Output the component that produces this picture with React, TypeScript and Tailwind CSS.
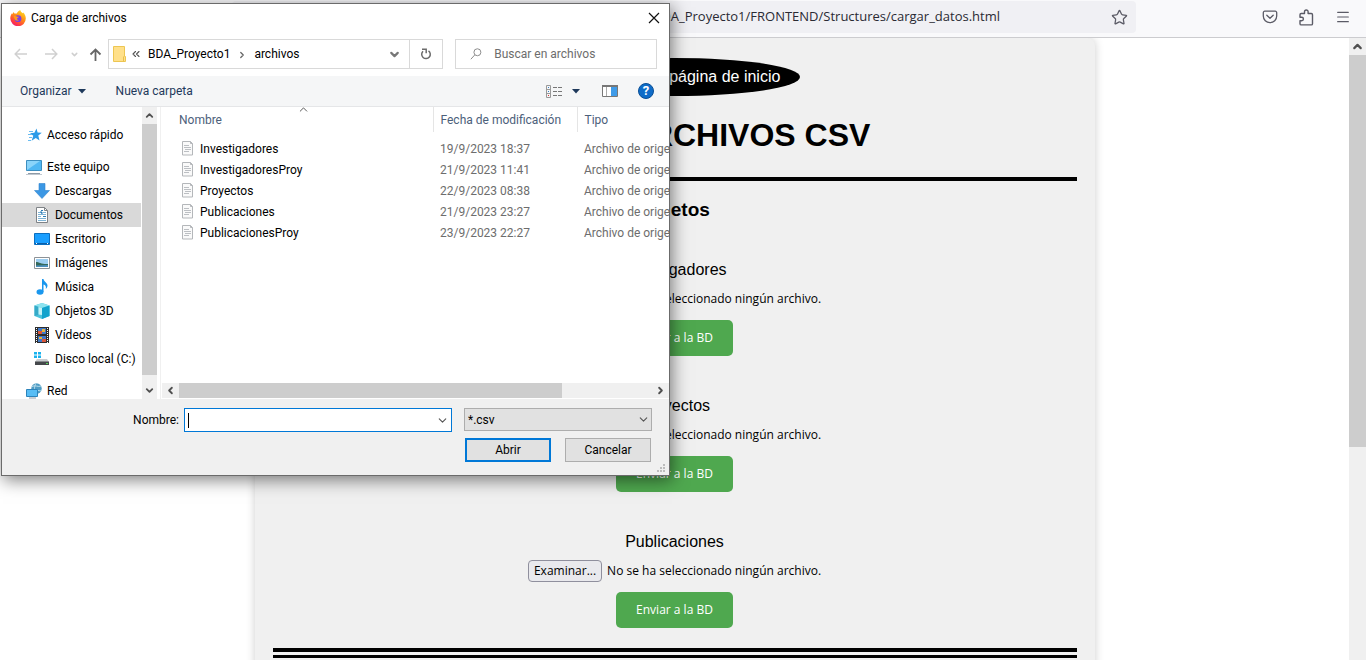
import type { ReactNode } from "react";
import { ChevronDown, ChevronLeft, ChevronRight, ChevronUp, ChevronsLeft, Menu, Star } from "lucide-react";

const uiFont = "font-['Open_Sans','Noto_Sans',sans-serif]";
const dialogFont = "font-['Roboto','Open_Sans',sans-serif]";

function Firefox() {
  return (
    <svg width="16" height="16" viewBox="0 0 16 16" aria-hidden="true">
      <defs>
        <linearGradient id="ffx" x1="0.8" y1="0" x2="0.2" y2="1">
          <stop offset="0" stopColor="#ffe226" />
          <stop offset="0.45" stopColor="#ff8a16" />
          <stop offset="0.8" stopColor="#ff3647" />
          <stop offset="1" stopColor="#e31587" />
        </linearGradient>
      </defs>
      <path d="M10.2 0c.3 1.700 1.500 2.300 2.500 3.200l.6-.7c1.500 1.600 2.500 3.700 2.500 5.900A7.700 7.700 0 0 1 .3 8.600C.2 6.300 1 4.600 2 3.200c0 .5 0 .8.2 1.100C2.600 3.300 3.300 2.500 4 2c-.1.7.1 1.200.5 1.500 1-.2 1.700-.1 2.300.1C7.400 2 8.600.7 10.200 0Z" fill="url(#ffx)" />
      <circle cx="8" cy="8.700" r="3.400" fill="#7b3fe4" />
      <path d="M3.600 6.200c1.300-.5 2.900-.3 3.700.5l1.600.1c-.2 1-1.500 1-1.800 1.800-.3.800.6 1.700 1.900 1.400-1 1.200-3.600.8-4.400-.7Z" fill="#ff9a1a" />
    </svg>
  );
}

function FolderIcon() {
  return (
    <svg width="14" height="18" viewBox="0 0 14 18" aria-hidden="true">
      <path d="M.5 1.500h11v10h1v5H.5Z" fill="#ffe08a" stroke="#edc652" />
      <path d="M10.500 11.500v5" stroke="#e8bf4c" />
    </svg>
  );
}

function FileIcon() {
  return (
    <svg width="12" height="15" viewBox="0 0 12 15" aria-hidden="true">
      <path d="M.5.5h8l2 2v11.500H.5Z" fill="#fafafa" stroke="#b4b7ba" />
      <path d="M8.500.5v2h2" fill="none" stroke="#b4b7ba" />
      <path d="M2 4.500h5M2 6.500h7M3 8.500h6M2 10.500h5" stroke="#bcbfc3" />
    </svg>
  );
}

const sideIcons: Record<string, ReactNode> = {
  star: (
    <>
      <path d="m10.500 1.500 1.100 4 4.200.3-3.500 2.700 1.200 5-3.700-2.600-4.200 2.900 1.700-5L4 6.300l4.400-.5Z" fill="#2c9be8" />
      <path d="M3 4.500h4M2 7.500h4M3 10.500h3M2 13.500h3" stroke="#6bbcf0" />
    </>
  ),
  pc: (
    <>
      <path d="M.5 1.500h15v10H.5Z" fill="#4fb7f3" stroke="#3d8fc0" />
      <path d="M1 11V2h13Z" fill="#8ad4fa" />
      <path d="M2 14.500h12" stroke="#8e9aa6" />
      <path d="M0 15.500h16" stroke="#c0c8d0" />
    </>
  ),
  down: <path d="M5 .5h6v7h4.500L8 15.500.5 7.500H5Z" fill="#3b97e4" stroke="#2f83cf" strokeWidth="0.600" />,
  docs: (
    <>
      <path d="M2.500.5h8l3 3v12h-11Z" fill="#fff" stroke="#7e8286" />
      <path d="M10.500.5v3h3" fill="none" stroke="#7e8286" />
      <path d="M4 5.500h2M9 5.500h3M4 7.500h8M4 9.500h3M4 11.500h8M4 13.500h8" stroke="#7fb4d6" />
      <path d="M7 3.500h2M6 5h2v2M9 9.500h3" stroke="#2a7db6" fill="#2a7db6" />
    </>
  ),
  desk: (
    <>
      <path d="M.5 2.500h15v11H.5Z" fill="#1a9fff" stroke="#0b6fc0" />
      <path d="M1 12.500h14" stroke="#0a5ea8" />
      <path d="M2 12.500h1M13 12.500h1" stroke="#fff" />
    </>
  ),
  img: (
    <>
      <path d="M.5 2.500h15v11H.5Z" fill="#fff" stroke="#8d9297" />
      <path d="M2 4h12v8H2Z" fill="#9ccdf0" />
      <path d="M2 7c3 0 6 2.500 12 2v3H2Z" fill="#35695b" />
      <path d="M2 10.500c4 0 8-.5 12-.5v2H2Z" fill="#4c8fbd" />
    </>
  ),
  music: (
    <>
      <path d="M8 0h1.500c.3 3 4 3.500 4 6.500 0 1.500-.7 2.500-1.700 3.500.5-2.500-.3-4-2.300-4.500V13H8Z" fill="#1a97ee" />
      <ellipse cx="6" cy="13" rx="3.500" ry="2.800" fill="#1a97ee" />
    </>
  ),
  cube: (
    <>
      <path d="m8 0 7.500 2.500v10.500L8 16 .5 13V2.500Z" fill="#4cc3dc" />
      <path d="m8 0 7.500 2.500L8 5 .5 2.500Z" fill="#8de3ef" />
      <path d="M.5 2.500 4.500 4v8L.5 13Z" fill="#35aac8" />
      <path d="M4.500 4 8 5v7l-3.500-.5Z" fill="#c5f3f8" />
      <path d="m8 5 7.500-2.500v10.500L8 16Z" fill="#12a3cd" />
    </>
  ),
  video: (
    <>
      <path d="M1 0h14v16H1Z" fill="#2d2d2d" />
      <path d="M2.500 1v15M13.500 1v15" stroke="#fff" strokeDasharray="1 1" />
      <path d="M4 1h8v6H4ZM4 9h8v6H4Z" fill="#3f78c8" />
      <path d="M4 4h4v3H4ZM8 12h4v3H8Z" fill="#d9573a" />
      <path d="M8 2h3v3H8ZM5 10h3v2H5Z" fill="#e5b33c" />
    </>
  ),
  disk: (
    <>
      <path d="M0 1h3v2.500H0ZM4 1h3v2.500H4ZM0 4.500h3V7H0ZM4 4.500h3V7H4Z" fill="#19b2ee" />
      <path d="M3 8h10l2 3H1Z" fill="#c9cccf" />
      <path d="M1 10.500h14V14H1Z" fill="#45484b" />
      <path d="M12 12.500h2" stroke="#59d65c" />
    </>
  ),
  net: (
    <>
      <circle cx="10.500" cy="5.500" r="5.200" fill="#4e9cc4" />
      <path d="M6 3.500c3-2 6 1 9-.5M6 7.500c4-2 6 1 9.500 0M10 .5c-2 3-2 7 0 10" stroke="#b9dcea" fill="none" />
      <path d="M.5 6.500h11v7H.5Z" fill="#57bdf5" stroke="#2c83ba" />
      <path d="M3 15h7" stroke="#8e9aa6" />
    </>
  ),
};

const places = [
  { icon: "star", label: "Acceso rápido", row: "pl-[24px] mb-2" },
  { icon: "pc", label: "Este equipo", row: "pl-[24px]" },
  { icon: "down", label: "Descargas", row: "pl-[32px]" },
  { icon: "docs", label: "Documentos", row: "pl-[32px] bg-[#d9d9d9]" },
  { icon: "desk", label: "Escritorio", row: "pl-[32px]" },
  { icon: "img", label: "Imágenes", row: "pl-[32px]" },
  { icon: "music", label: "Música", row: "pl-[32px]" },
  { icon: "cube", label: "Objetos 3D", row: "pl-[32px]" },
  { icon: "video", label: "Vídeos", row: "pl-[32px]" },
  { icon: "disk", label: "Disco local (C:)", row: "pl-[32px] mb-2" },
  { icon: "net", label: "Red", row: "pl-[24px]" },
];

const files = [
  ["Investigadores", "19/9/2023 18:37"],
  ["InvestigadoresProy", "21/9/2023 11:41"],
  ["Proyectos", "22/9/2023 08:38"],
  ["Publicaciones", "21/9/2023 23:27"],
  ["PublicacionesProy", "23/9/2023 22:27"],
];

function BrowserBar() {
  return (
    <header className="flex h-[38px] shrink-0 items-start border-b border-[#cccccf] bg-[#f9f9fb] pr-[15px] pt-px text-[#5b5b66]">
      <div className="ml-[232px] flex h-8 flex-1 items-center rounded bg-[#f0f0f4] pr-2">
        <input
          aria-label="Dirección"
          readOnly
          className={`${uiFont} min-w-0 flex-1 bg-transparent pr-[111px] text-right text-[13px] text-[#2a2a33] outline-none`}
          value="localhost/BDA_Proyecto1/FRONTEND/Structures/cargar_datos.html"
        />
        <button aria-label="Añadir marcador">
          <Star size={17} strokeWidth={1.8} />
        </button>
      </div>
      <div className="ml-[126px] flex h-8 items-center gap-5">
        <button aria-label="Pocket">
          <svg width="16" height="16" viewBox="0 0 16 16" fill="none" stroke="currentColor" strokeWidth="1.300" strokeLinecap="round" strokeLinejoin="round">
            <path d="M2.800 2.200h10.400a1.500 1.500 0 0 1 1.500 1.500V7A6.700 6.700 0 0 1 1.300 7V3.700a1.500 1.500 0 0 1 1.500-1.500Z" />
            <path d="m4.800 6.200 3.200 3 3.200-3" />
          </svg>
        </button>
        <button aria-label="Extensiones">
          <svg width="17" height="17" viewBox="0 0 17 17" fill="none" stroke="currentColor" strokeWidth="1.400" strokeLinejoin="round">
            <path d="M6.500 4.500V2.800a1.800 1.800 0 0 1 3.600 0v1.700h3.200c.8 0 1.200.4 1.200 1.200v9c0 .8-.4 1.200-1.200 1.200H3.200c-.8 0-1.200-.4-1.200-1.200v-3h1.700a1.700 1.700 0 0 0 0-3.400H2V5.700c0-.8.400-1.200 1.200-1.200Z" />
          </svg>
        </button>
        <button aria-label="Menú">
          <Menu size={16} strokeWidth={1.8} />
        </button>
      </div>
    </header>
  );
}

function Upload({ title, id }: { title: string; id: string }) {
  return (
    <form className="mb-10 flex flex-col items-center last-of-type:mb-5">
      <p className="text-[16px] leading-[19px]">{title}</p>
      <div className={`${uiFont} mt-[9px] flex h-[22px] items-center gap-[5px] text-[12px]`}>
        <label htmlFor={id} className="flex h-[22px] items-center rounded-[4px] border border-[#8f8f9d] bg-[#e9e9ed] px-[5px]">
          Examinar...
        </label>
        <input id={id} type="file" accept=".csv" className="sr-only" />
        <span>No se ha seleccionado ningún archivo.</span>
      </div>
      <button type="button" className={`${uiFont} mt-[10px] h-9 rounded-[5px] bg-[#4fa84f] px-5 text-[12px] text-white`}>
        Enviar a la BD
      </button>
    </form>
  );
}

function Dialog() {
  return (
    <section
      role="dialog"
      aria-label="Carga de archivos"
      className={`${dialogFont} absolute left-px top-[3px] flex w-[669px] flex-col border border-[#6b6b6b] bg-white text-[12px] leading-4 text-black shadow-[2px_4px_16px_rgba(0,0,0,0.5)]`}
    >
      <div className="flex h-[28px] items-center pl-2 pr-2">
        <Firefox />
        <h2 className="ml-[5px] flex-1">Carga de archivos</h2>
        <button aria-label="Cerrar">
          <svg width="14" height="14" viewBox="0 0 14 14" stroke="#111" strokeWidth="1.200">
            <path d="m2 2 10 10M12 2 2 12" />
          </svg>
        </button>
      </div>

      <div className="flex h-[44px] items-center pl-3 pr-3">
        <button aria-label="Atrás">
          <svg width="14" height="12" viewBox="0 0 14 12" fill="none" stroke="#d0d0d0" strokeWidth="1.500">
            <path d="M13 6H1.500M6 1 1.200 6 6 11" />
          </svg>
        </button>
        <button aria-label="Adelante" className="ml-4">
          <svg width="14" height="12" viewBox="0 0 14 12" fill="none" stroke="#d0d0d0" strokeWidth="1.500">
            <path d="M1 6h11.500M8 1l4.800 5L8 11" />
          </svg>
        </button>
        <button aria-label="Recientes" className="ml-3 text-[#cfcfcf]">
          <ChevronDown size={9} strokeWidth={4} />
        </button>
        <button aria-label="Subir" className="ml-[10px]">
          <svg width="13" height="13" viewBox="0 0 13 13" fill="none" stroke="#666" strokeWidth="1.800">
            <path d="M6.500 13V2M1.500 6.500l5-5 5 5" />
          </svg>
        </button>
        <div className="ml-[6px] flex h-[30px] w-[302px] items-center border border-[#d9d9d9] pl-1">
          <FolderIcon />
          <ChevronsLeft size={12} strokeWidth={2.2} className="ml-[3px] text-[#555]" />
          <span className="ml-[6px] flex-1 whitespace-nowrap">
            <span>BDA_Proyecto1</span>
            <ChevronRight size={10} strokeWidth={3} className="mx-[7px] inline text-[#666]" />
            <span>archivos</span>
          </span>
          <button aria-label="Ubicaciones anteriores" className="mr-2 text-[#777]">
            <ChevronDown size={13} strokeWidth={4} />
          </button>
        </div>
        <button aria-label="Actualizar" className="-ml-px flex h-[30px] w-[34px] items-center justify-center border border-[#d9d9d9]">
          <svg width="12" height="12" viewBox="0 0 12 12" fill="none" stroke="#6b6b6b" strokeWidth="1.500">
            <path d="M8.500 2.800A4.300 4.300 0 1 1 3 3.200" />
            <path d="M2 1.200h4.200v4" />
          </svg>
        </button>
        <div className="ml-3 flex h-[30px] flex-1 items-center border border-[#d9d9d9] pl-[14px]">
          <svg width="14" height="14" viewBox="0 0 14 14" fill="none" stroke="#888" strokeWidth="1.100">
            <circle cx="8.500" cy="5" r="4" />
            <path d="M5.500 8 1 13" />
          </svg>
          <input aria-label="Buscar en archivos" placeholder="Buscar en archivos" className="ml-3 w-full min-w-0 outline-none placeholder:text-[#6d6d6d]" />
        </div>
      </div>

      <div className="flex h-[31px] items-center border-b border-[#e5e6e8] bg-[#f5f6f7] pl-[18px] pr-[15px] text-[#1e395b]">
        <button className="flex items-center gap-[6px]">
          Organizar
          <svg width="8" height="5" viewBox="0 0 8 5" fill="#1e395b"><path d="M0 0h8L4 4.500Z" /></svg>
        </button>
        <button className="ml-[30px]">Nueva carpeta</button>
        <button aria-label="Cambiar la vista" className="ml-auto flex items-center gap-[9px]">
          <svg width="17" height="13" viewBox="0 0 17 13" fill="none">
            <path d="M.5.5h4v12h-4ZM.5 4.500h4M.5 8.500h4" stroke="#999" />
            <path d="M7 2.500h4M12 2.500h4M7 6.500h4M12 6.500h4M7 10.500h4M12 10.500h4" stroke="#777" />
            <path d="M2 2.500h1M2 6.500h1" stroke="#3a7fc4" />
            <path d="M2 10.500h1" stroke="#d33" />
          </svg>
          <svg width="8" height="5" viewBox="0 0 8 5" fill="#1e395b"><path d="M0 0h8L4 4.500Z" /></svg>
        </button>
        <button aria-label="Panel de vista previa" className="ml-[22px]">
          <svg width="16" height="12" viewBox="0 0 16 12" fill="none">
            <path d="M.5.5h15v11H.5Z" fill="#fff" stroke="#777" />
            <path d="M0 1h16" stroke="#777" strokeWidth="2" />
            <path d="M4.500 2v9" stroke="#aaa" />
            <path d="M9 2h6v9H9Z" fill="#3f9be8" />
          </svg>
        </button>
        <button aria-label="Ayuda" className="ml-5 flex size-4 items-center justify-center rounded-full border border-[#0a4f96] bg-[#0f6cc8] text-[13px] font-bold text-white">
          ?
        </button>
      </div>

      <div className="flex h-[292px]">
        <nav aria-label="Ubicaciones" className="w-[139px] overflow-hidden pt-4">
          <ul>
            {places.map((p) => (
              <li key={p.label} className={`flex h-6 items-center gap-[5px] whitespace-nowrap ${p.row}`}>
                <svg width="16" height="16" viewBox="0 0 16 16" className="shrink-0" aria-hidden="true">
                  {sideIcons[p.icon]}
                </svg>
                {p.label}
              </li>
            ))}
          </ul>
        </nav>
        <div className="ml-px flex w-[15px] flex-col items-center bg-[#f0f0f0] text-[#505050]">
          <ChevronUp size={11} strokeWidth={4} className="my-[3px]" />
          <div className="w-full flex-1 bg-[#cdcdcd]" />
          <ChevronDown size={11} strokeWidth={4} className="mb-[3px] mt-[10px]" />
        </div>
        <div className="ml-[3px] flex min-w-0 flex-1 flex-col border-l border-[#f0f0f0]">
          <div className="relative min-h-0 flex-1 overflow-hidden">
            <ChevronUp size={13} strokeWidth={1.8} className="absolute -top-1 left-[136px] text-[#555]" />
            <table className="w-[620px] table-fixed border-collapse text-left">
              <thead>
                <tr className="h-[25px] text-[#4c607a]">
                  <th className="w-[272px] border-r border-[#e5e5e5] pl-[18px] font-normal">Nombre</th>
                  <th className="w-[144px] border-r border-[#e5e5e5] pl-[7px] font-normal">Fecha de modificación</th>
                  <th className="pl-[7px] font-normal">Tipo</th>
                </tr>
              </thead>
              <tbody className="text-[#6d6d6d] before:block before:h-[6px]">
                {files.map(([name, date]) => (
                  <tr key={name} className="h-[21px]">
                    <td className="pl-[21px] text-black">
                      <span className="flex items-center gap-[6px]">
                        <FileIcon />
                        {name}
                      </span>
                    </td>
                    <td className="pl-[7px]">{date}</td>
                    <td className="whitespace-nowrap pl-[7px]">Archivo de origen</td>
                  </tr>
                ))}
              </tbody>
            </table>
          </div>
          <div className="mb-px ml-px flex h-[15px] items-center bg-[#f0f0f0] text-[#505050]">
            <ChevronLeft size={11} strokeWidth={4} className="mx-[3px]" />
            <div className="h-full w-[383px] bg-[#cdcdcd]" />
            <ChevronRight size={11} strokeWidth={4} className="ml-auto mr-[3px]" />
          </div>
        </div>
      </div>

      <div className="relative bg-[#f0f0f0] pb-[13px] pr-[17px] pt-[9px]">
        <div className="flex items-start justify-end">
          <label htmlFor="filename" className="mr-[5px] leading-6">Nombre:</label>
          <div className="flex h-6 w-[268px] items-center border border-[#0078d7] bg-white pr-[2px]">
            <span className="ml-[3px] h-[15px] w-px bg-black" />
            <input id="filename" className="min-w-0 flex-1 outline-none" />
            <ChevronDown size={13} strokeWidth={2} className="text-[#555]" />
          </div>
          <div className="relative ml-3 w-[188px]">
            <select aria-label="Tipo de archivo" className="h-[23px] w-full appearance-none border border-[#adadad] bg-[#e1e1e1] pl-[3px]">
              <option>*.csv</option>
            </select>
            <ChevronDown size={13} strokeWidth={2} className="absolute right-[2px] top-[5px] text-[#555]" />
          </div>
        </div>
        <div className="mt-[6px] flex justify-end gap-[14px] pr-px">
          <button className="h-6 w-[86px] border-2 border-[#0078d7] bg-[#e1e1e1]">Abrir</button>
          <button className="h-6 w-[86px] border border-[#adadad] bg-[#e1e1e1]">Cancelar</button>
        </div>
        <svg width="9" height="9" viewBox="0 0 9 9" className="absolute bottom-[2px] right-[3px]" fill="#bdbdbd">
          <path d="M6 0h2v2H6ZM3 3h2v2H3ZM6 3h2v2H6ZM0 6h2v2H0ZM3 6h2v2H3ZM6 6h2v2H6Z" />
        </svg>
      </div>
    </section>
  );
}

export default function App() {
  return (
    <div className="relative flex h-screen flex-col overflow-hidden bg-white font-['Liberation_Sans',Arial,sans-serif] text-black">
      <BrowserBar />
      <div className="flex min-h-0 flex-1">
        <main className="min-w-0 flex-1 overflow-hidden">
          <div className="mx-auto flex w-full max-w-[840px] flex-col rounded-t-[8px] bg-[#f0f0f0] px-[18px] pb-5 pt-5 shadow-[0_0_10px_rgba(0,0,0,0.2)]">
            <a href="#inicio" className="flex h-[38px] items-center self-center rounded-[50%] bg-black px-5 text-[16px] text-white">
              Regresar a la página de inicio
            </a>
            <h1 className="mt-[21px] text-center text-[32px] font-bold leading-[37px]">CARGAR ARCHIVOS CSV</h1>
            <hr className="mt-[23px] border-0 border-t-4 border-black" />
            <h3 className="mb-10 mt-[18px] text-center text-[19px] font-bold leading-[21px]">Objetos</h3>
            <Upload title="Investigadores" id="f1" />
            <Upload title="Proyectos" id="f2" />
            <Upload title="Publicaciones" id="f3" />
            <hr className="h-[10px] border-b-[3px] border-t-4 border-black" />
          </div>
        </main>
        <div className="flex w-[17px] flex-col items-center bg-[#f0f0f0] text-[#505050]">
          <ChevronUp size={13} strokeWidth={4} className="my-[2px] shrink-0" />
          <div className="h-[63%] w-full bg-[#cdcdcd]" />
        </div>
      </div>
      <Dialog />
    </div>
  );
}
